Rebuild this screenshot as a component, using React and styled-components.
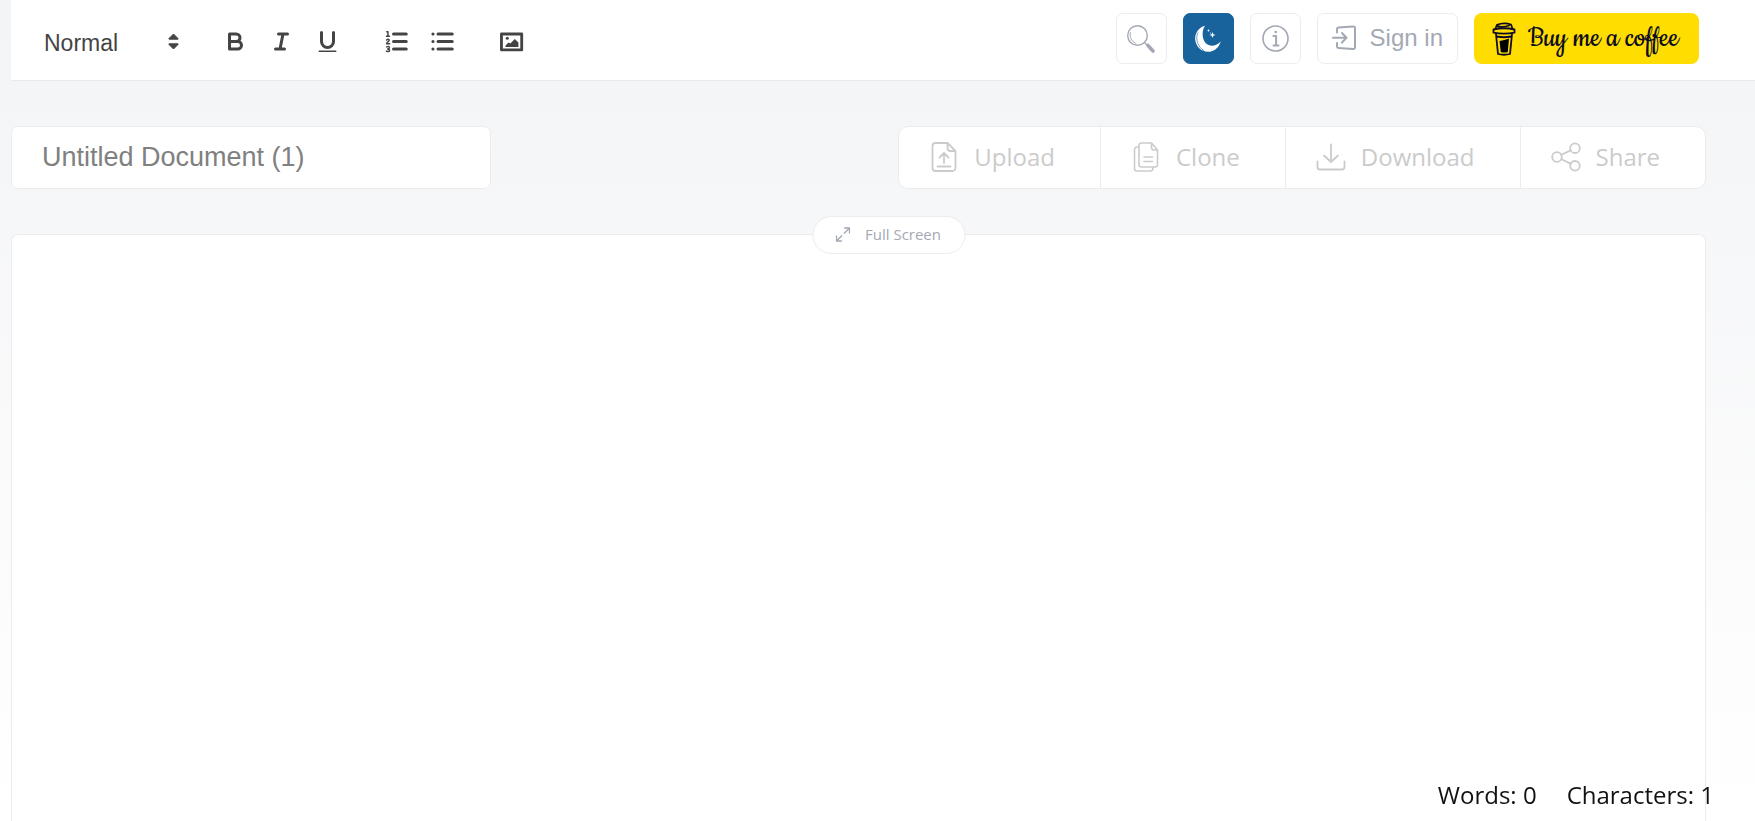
import React from 'react';
import styled, { createGlobalStyle } from 'styled-components';

const GlobalStyle = createGlobalStyle`
  *, *::before, *::after { box-sizing: border-box; }
  body {
    margin: 0;
    background: #fff;
    font-family: "Open Sans", "Noto Sans", sans-serif;
    overflow: hidden;
  }
  button, input, select { font: inherit; margin: 0; }
`;

const Page = styled.div`
  display: flex;
  flex-direction: column;
  height: 100vh;
  padding-left: 11px;
  background: linear-gradient(#f3f4f6, #ffffff);
`;

const TopBar = styled.header`
  display: flex;
  flex: none;
  justify-content: space-between;
  height: 81px;
  padding: 13px 56px 0 33px;
  background: #fff;
  border-bottom: 1px solid #e9eaec;
`;

const FormatBar = styled.div`
  display: flex;
  align-items: center;
  height: 57px;
`;

const FormatGroup = styled.div`
  display: flex;
  gap: 14px;
  margin-left: 37px;
`;

const HeadingPicker = styled.label`
  display: flex;
  align-items: center;
  margin-right: 3px;
  color: #444;
`;

const HeadingSelect = styled.select`
  width: 124px;
  padding: 2px 0 0;
  border: 0;
  appearance: none;
  background: transparent;
  color: #444;
  font-family: "Liberation Sans", Arial, sans-serif;
  font-size: 23px;
  line-height: 28px;
`;

const FormatButton = styled.button`
  display: grid;
  place-items: center;
  width: 32px;
  height: 32px;
  padding: 0;
  border: 0;
  background: none;
  color: #444;
`;

const Actions = styled.nav`
  display: flex;
  gap: 16px;
`;

const ActionButton = styled.button`
  display: flex;
  align-items: center;
  justify-content: center;
  gap: 13px;
  height: 51px;
  min-width: 51px;
  padding: ${(p) => (p.$wide ? '0 14px 2px' : '0')};
  border: 1px solid ${(p) => (p.$active ? '#19639c' : '#ebecee')};
  border-radius: 7px;
  background: ${(p) => (p.$active ? '#19639c' : '#fff')};
  color: ${(p) => (p.$active ? '#fff' : '#a2a9b4')};
  font-family: "Liberation Sans", Arial, sans-serif;
  font-size: 24px;
  line-height: 28px;
`;

const CoffeeLink = styled.a`
  display: flex;
  align-items: center;
  gap: 12px;
  width: 225px;
  height: 51px;
  padding-left: 18px;
  border-radius: 8px;
  background: #ffdd00;
  color: #0d0c22;
  font-family: Cookie, Lato, sans-serif;
  font-size: 32px;
  line-height: 32px;
  text-decoration: none;
  white-space: nowrap;
`;

const Content = styled.main`
  display: flex;
  flex: 1;
  flex-direction: column;
  min-height: 0;
  padding: 45px 49px 0 0;
`;

const DocumentBar = styled.div`
  display: flex;
  justify-content: space-between;
  margin-bottom: 45px;
`;

const TitleInput = styled.input`
  width: 480px;
  height: 63px;
  padding: 0 30px 1px;
  border: 1px solid #ebecee;
  border-radius: 7px;
  background: #fff;
  color: #808080;
  font-family: "Liberation Sans", Arial, sans-serif;
  font-size: 27px;
`;

const FileActions = styled.div`
  display: flex;
  height: 63px;
  border: 1px solid #ebecee;
  border-radius: 10px;
  background: #fff;
  overflow: hidden;
`;

const FileButton = styled.button`
  display: flex;
  align-items: center;
  gap: 15px;
  padding: 0 45px 2px 30px;
  border: 0;
  background: none;
  color: #cbcbcb;
  font-size: 24px;
  line-height: 32px;

  & + & { border-left: 1px solid #ebecee; }
`;

const Sheet = styled.section`
  position: relative;
  display: flex;
  flex: 1;
  justify-content: center;
  border: 1px solid #ebecee;
  border-bottom: 0;
  border-radius: 7px 7px 0 0;
  background: #fff;
`;

const Editor = styled.div`
  flex: 1;
  outline: none;
`;

const FullScreenButton = styled.button`
  position: absolute;
  top: -19px;
  left: calc(50% + 30px);
  display: flex;
  align-items: center;
  gap: 15px;
  height: 38px;
  padding: 0 23px 2px 22px;
  border: 1px solid #ebecee;
  border-radius: 19px;
  background: #fff;
  color: #a2a9b4;
  font-size: 15px;
  line-height: 20px;
  white-space: nowrap;
  transform: translateX(-50%);
`;

const Counts = styled.footer`
  position: fixed;
  right: 41px;
  bottom: 10px;
  display: flex;
  gap: 30px;
  color: #111;
  font-size: 24px;
  line-height: 32px;
`;

const Icon = ({ size = 27, box = 24, width = 2, children }) => (
  <svg
    width={size}
    height={size}
    viewBox={`0 0 ${box} ${box}`}
    fill="none"
    stroke="currentColor"
    strokeWidth={width}
    strokeLinecap="round"
    strokeLinejoin="round"
    aria-hidden="true"
  >
    {children}
  </svg>
);

const SortArrows = () => (
  <svg width="11" height="17" viewBox="0 0 11 17" fill="currentColor" stroke="currentColor" strokeLinejoin="round" aria-hidden="true">
    <path d="M5.5 1 10 5.5v.7H1v-.7zM5.5 16 10 11.500v-.7H1v.7z" />
  </svg>
);

const BoldIcon = () => (
  <Icon box={18}>
    <path d="M5 4h4.500a2.500 2.500 0 0 1 0 5H5zM5 9h5.500a2.500 2.500 0 0 1 0 5H5z" />
  </Icon>
);

const ItalicIcon = () => (
  <Icon box={18}>
    <path d="M7 4h6M5 14h6M10 4 8 14" />
  </Icon>
);

const UnderlineIcon = () => (
  <Icon box={18}>
    <path d="M5 3v6a4 4 0 0 0 8 0V3" />
    <path d="M3.500 15.500h11" strokeWidth="1" />
  </Icon>
);

const OrderedIcon = () => (
  <Icon box={18}>
    <path d="M7 4h8.500M7 9h8.500M7 14h8.500" />
    <g strokeWidth="1">
      <path d="M2.500 2.500h.8v3M2.300 5.500h2" />
      <path d="M2.400 8q1-1 1.700 0c.3.800-1.700 1.500-1.700 2.500h2" />
      <path d="M2.400 12.600q2-.6 1.900.5-.1.800-1.200.9 1.300 0 1.300.8c0 1.200-1.500 1-2.100.6" />
    </g>
  </Icon>
);

const BulletIcon = () => (
  <Icon box={18}>
    <path d="M6 4h9.500M6 9h9.500M6 14h9.500M2.600 4h.1M2.600 9h.1M2.600 14h.1" />
  </Icon>
);

const ImageIcon = () => (
  <Icon box={18}>
    <rect x="2.300" y="4" width="13.500" height="10.600" strokeWidth="1.900" />
    <circle cx="6.200" cy="6.900" r="1" fill="currentColor" stroke="none" />
    <path d="M5 12.600v-1l2-2 1.200.7 3-3 2.400 2.400v2.900z" fill="currentColor" stroke="none" />
  </Icon>
);

const SearchIcon = () => (
  <Icon size={30} box={30} width={1.400}>
    <circle cx="11.500" cy="11.500" r="9.800" />
    <path d="M4.300 8.500C3.300 13 5.500 17.500 9.500 19.200" strokeWidth="1" />
    <path d="m18.500 18.500 2.500 2.500" />
    <path d="m22 21.500 5 5.500" strokeWidth="3.600" />
  </Icon>
);

const MoonIcon = () => (
  <svg width="28" height="28" viewBox="0 0 28 28" fill="currentColor" aria-hidden="true">
    <path d="M11 .8C4.500 2.500.8 8.500 1.200 14.500c.5 7 6 12.300 12.800 12.300 6 0 11-4 12.800-10.600-4 5-11 6-15 2C8 14.200 7.500 6 11 .8z" />
    <path d="M4 7.500C.8 14 4 22.500 10 25.500" fill="none" stroke="#19639c" strokeWidth=".6" />
    <path d="m18.500 7 .8 2.200 2.200.8-2.200.8-.8 2.200-.8-2.200-2.200-.8 2.200-.8z" />
    <circle cx="14.500" cy="5.500" r=".9" />
    <circle cx="16.500" cy="8" r=".5" />
  </svg>
);

const InfoIcon = () => (
  <Icon size={27} box={27} width={1.600}>
    <circle cx="13.500" cy="13.500" r="12.500" />
    <path d="M11.500 11h2.600v9.500M11.500 20.500h5" strokeWidth="2" />
    <circle cx="13.700" cy="7" r="1.300" fill="currentColor" stroke="none" />
  </Icon>
);

const SignInIcon = () => (
  <Icon size={25} box={25} width={2}>
    <path d="M5 7.500V4q0-1.500 1.500-1.600L21 1.500q2-.1 2 1.500v19q0 2-2 1.900L6.500 23Q5 22.900 5 21.500V18M1 12.700h13.500M10 8l4.500 4.700L10 17.500" />
  </Icon>
);

const CupIcon = () => (
  <svg width="24" height="34" viewBox="0 0 24 34" fill="none" stroke="#0d0c22" strokeWidth="1.800" strokeLinejoin="round" strokeLinecap="round" aria-hidden="true">
    <path d="M3.500 6.500 5 2.800Q12 0 19 2.500L20.500 6.500M6 4.500q6 1 11-1" />
    <path d="M1.500 7.500Q12 5 22.500 7.500v3.200Q12 12.500 1.500 10.700z" />
    <path d="M4 12 6 32q6 1.500 12 0L20 12M5 14.500q7 1.500 14 0" />
    <path d="M7.500 19q5-1 9.500-2.500L15.800 30q-3.500 1-7 0z" fill="#000" stroke="none" />
  </svg>
);

const UploadIcon = () => (
  <Icon size={30} box={30} width={1.800}>
    <path d="M18.500 1H6.500a3 3 0 0 0-3 3v22a3 3 0 0 0 3 3h17a3 3 0 0 0 3-3V9zV6a3 3 0 0 0 3 3h5M15 21V11.500M10.500 15.500l4.500-4.500 4.500 4.500M8.500 24.500h13" />
  </Icon>
);

const CloneIcon = () => (
  <Icon size={30} box={30} width={1.600}>
    <path d="M20.500 1h-10a2.500 2.500 0 0 0-2.500 2.500v19A2.500 2.500 0 0 0 10.500 25H24a2.500 2.500 0 0 0 2.500-2.500V8zV5.500A2.500 2.500 0 0 0 23 8h3.500M8 5H6a2.500 2.500 0 0 0-2.500 2.500v19A2.500 2.500 0 0 0 6 29h13.500q2.500 0 2.500-3.500M13 15h8.500M13 19.500h8.500" />
  </Icon>
);

const DownloadIcon = () => (
  <Icon size={30} box={30} width={1.800}>
    <path d="M15 2.500V20M8 13.500l7 6.500 7-6.500M1.500 19.500V25q0 2.500 2.500 2.500h22q2.500 0 2.500-2.500v-5.500" />
  </Icon>
);

const ShareIcon = () => (
  <Icon size={30} box={30} width={1.800}>
    <circle cx="6" cy="15" r="4.800" />
    <circle cx="24" cy="6.200" r="4.800" />
    <circle cx="24" cy="23.800" r="4.800" />
    <path d="m10.400 12.800 9.200-4.400M10.400 17.200l9.200 4.400" />
  </Icon>
);

const ExpandIcon = () => (
  <Icon size={15} box={15} width={1.300}>
    <path d="M9 1h5v5M14 1 8.800 6.200M6 14H1V9M1 14l5.200-5.200" />
  </Icon>
);

const FORMAT_GROUPS = [
  [['Bold', BoldIcon], ['Italic', ItalicIcon], ['Underline', UnderlineIcon]],
  [['Numbered list', OrderedIcon], ['Bulleted list', BulletIcon]],
  [['Insert image', ImageIcon]],
];

const FILE_ACTIONS = [
  ['Upload', UploadIcon],
  ['Clone', CloneIcon],
  ['Download', DownloadIcon],
  ['Share', ShareIcon],
];

export default function App() {
  return (
    <Page>
      <GlobalStyle />
      <TopBar>
        <FormatBar role="toolbar" aria-label="Formatting">
          <HeadingPicker>
            <HeadingSelect aria-label="Text style">
              <option>Normal</option>
            </HeadingSelect>
            <SortArrows />
          </HeadingPicker>
          {FORMAT_GROUPS.map((group) => (
            <FormatGroup key={group[0][0]}>
              {group.map(([label, Glyph]) => (
                <FormatButton key={label} type="button" aria-label={label}>
                  <Glyph />
                </FormatButton>
              ))}
            </FormatGroup>
          ))}
        </FormatBar>
        <Actions aria-label="Site">
          <ActionButton type="button" aria-label="Search"><SearchIcon /></ActionButton>
          <ActionButton type="button" aria-label="Dark mode" $active><MoonIcon /></ActionButton>
          <ActionButton type="button" aria-label="About"><InfoIcon /></ActionButton>
          <ActionButton type="button" $wide><SignInIcon />Sign in</ActionButton>
          <CoffeeLink href="#coffee"><CupIcon />Buy me a coffee</CoffeeLink>
        </Actions>
      </TopBar>
      <Content>
        <DocumentBar>
          <TitleInput aria-label="Document title" defaultValue="Untitled Document (1)" />
          <FileActions>
            {FILE_ACTIONS.map(([label, Glyph]) => (
              <FileButton key={label} type="button"><Glyph />{label}</FileButton>
            ))}
          </FileActions>
        </DocumentBar>
        <Sheet>
          <FullScreenButton type="button"><ExpandIcon />Full Screen</FullScreenButton>
          <Editor contentEditable suppressContentEditableWarning role="textbox" aria-label="Document" />
        </Sheet>
      </Content>
      <Counts>
        <span>Words: 0</span>
        <span>Characters: 1</span>
      </Counts>
    </Page>
  );
}
